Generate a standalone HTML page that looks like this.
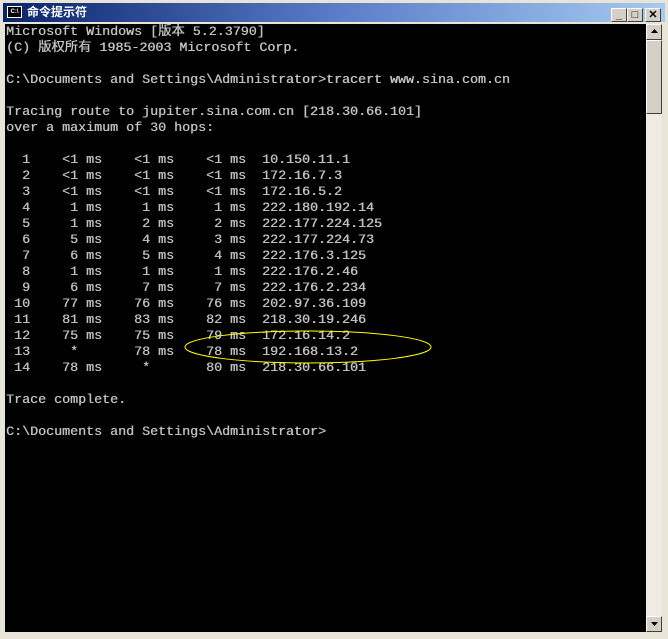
<!DOCTYPE html>
<html><head><meta charset="utf-8"><style>
html,body{margin:0;padding:0;}
body{width:668px;height:639px;background:#e8e4d8;position:relative;overflow:hidden;}
.title{position:absolute;left:3px;top:3px;width:662px;height:19px;background:linear-gradient(90deg,#0a246a,#5a7cc8 50%,#a6caf0);}
.title .ico{position:absolute;left:4px;top:3px;width:15px;height:12px;background:#000;border:1px solid #fff;box-sizing:border-box;color:#fff;font:bold 6px "Liberation Sans",sans-serif;line-height:10px;text-align:center;}
.title .t{position:absolute;left:24px;top:1px;color:#fff;font:bold 12px "Liberation Sans","Noto Sans CJK SC",sans-serif;line-height:17px;}
.btn{position:absolute;top:5px;width:16px;height:14px;background:#d4d0c8;border:1px solid;border-color:#fff #404040 #404040 #fff;box-sizing:border-box;font:bold 11px "Liberation Sans",sans-serif;text-align:center;line-height:12px;color:#000;}
.con{position:absolute;left:5px;top:24px;width:641px;height:608px;background:#000;}
pre{margin:0;position:absolute;left:1px;top:1px;color:#c0c0c0;font-family:"Liberation Mono","Noto Sans CJK SC",monospace;font-size:13.33px;line-height:16px;text-shadow:0.4px 0 0 #c0c0c0;}
.sb{position:absolute;left:646px;top:24px;width:16px;height:608px;background:#f0ece4;}
.sbtn{position:absolute;left:0;width:16px;height:16px;background:#d4d0c8;border:1px solid;border-color:#fff #404040 #404040 #fff;box-sizing:border-box;}
.thumb{position:absolute;left:0;top:16px;width:16px;height:74px;background:#d4d0c8;border:1px solid;border-color:#fff #404040 #404040 #fff;box-sizing:border-box;}
</style></head><body>
<div class="title"><div class="ico">C:\</div><div class="t">命令提示符</div>
<div class="btn" style="left:608px">_</div><div class="btn" style="left:624px">□</div><div class="btn" style="left:642px">✕</div></div>
<div class="con"><pre>Microsoft Windows [版本 5.2.3790]
(C) 版权所有 1985-2003 Microsoft Corp.

C:\Documents and Settings\Administrator&gt;tracert www.sina.com.cn

Tracing route to jupiter.sina.com.cn [218.30.66.101]
over a maximum of 30 hops:

  1    &lt;1 ms    &lt;1 ms    &lt;1 ms  10.150.11.1
  2    &lt;1 ms    &lt;1 ms    &lt;1 ms  172.16.7.3
  3    &lt;1 ms    &lt;1 ms    &lt;1 ms  172.16.5.2
  4     1 ms     1 ms     1 ms  222.180.192.14
  5     1 ms     2 ms     2 ms  222.177.224.125
  6     5 ms     4 ms     3 ms  222.177.224.73
  7     6 ms     5 ms     4 ms  222.176.3.125
  8     1 ms     1 ms     1 ms  222.176.2.46
  9     6 ms     7 ms     7 ms  222.176.2.234
 10    77 ms    76 ms    76 ms  202.97.36.109
 11    81 ms    83 ms    82 ms  218.30.19.246
 12    75 ms    75 ms    79 ms  172.16.14.2
 13     *       78 ms    78 ms  192.168.13.2
 14    78 ms     *       80 ms  218.30.66.101

Trace complete.

C:\Documents and Settings\Administrator&gt;</pre></div>
<svg style="position:absolute;left:0;top:0" width="668" height="639"><ellipse cx="308" cy="347" rx="123" ry="16" fill="none" stroke="#ffff00" stroke-width="1"/></svg>
<div class="sb"><div class="sbtn" style="top:0"><svg width="14" height="14"><path d="M4 8h7l-3.5-4z" fill="#000"/></svg></div><div class="thumb"></div><div class="sbtn" style="top:592px"><svg width="14" height="14"><path d="M4 5h7l-3.5 4z" fill="#000"/></svg></div></div>
</body></html>
